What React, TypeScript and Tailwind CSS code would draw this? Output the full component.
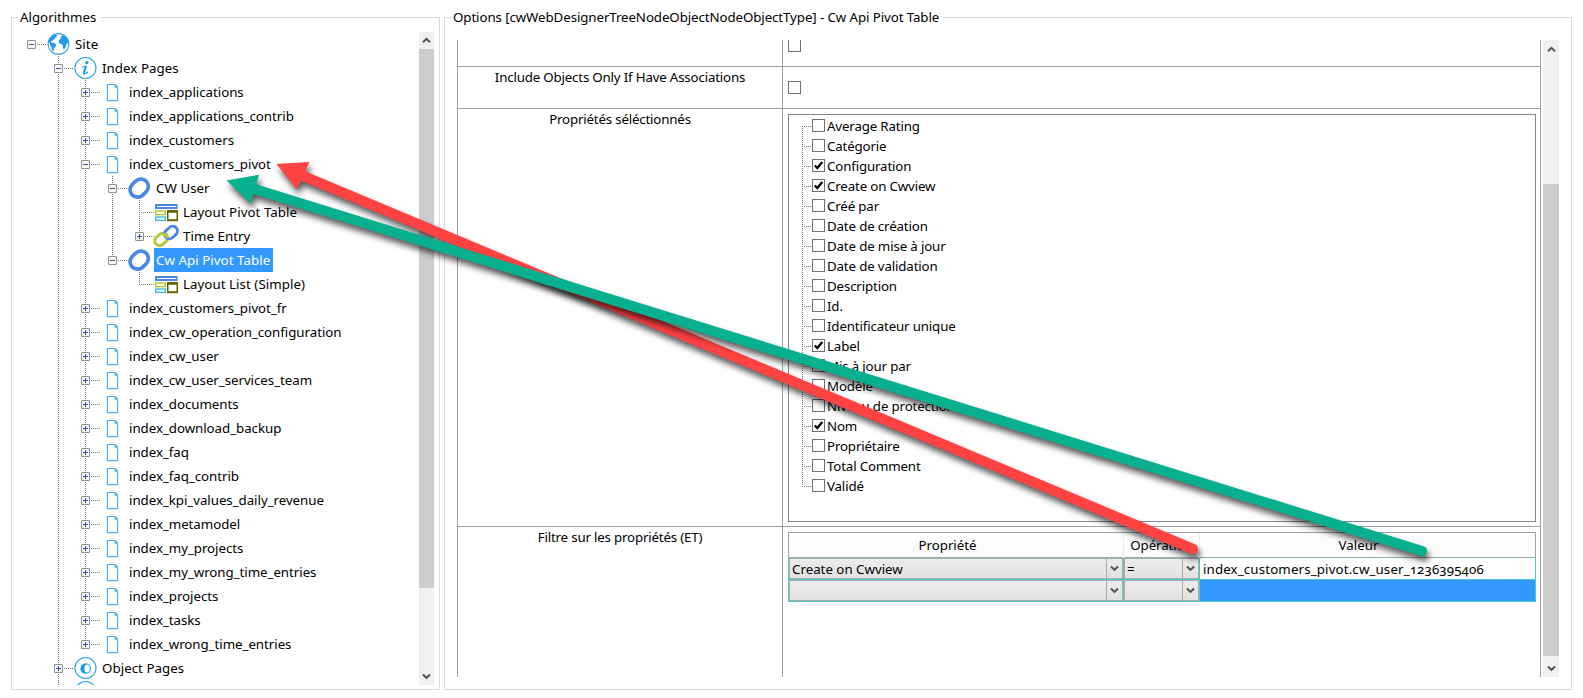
import type { ReactNode } from "react";

type IconName = "globe" | "info" | "page" | "ring" | "layout" | "links" | "object" | "circle";

// guides: one character per tree level.
// "." empty, "|" line passes through, "T" branch, "L" last branch, "H" root branch
type TreeRow = {
  guides: string;
  toggle?: "+" | "-";
  icon: IconName;
  label: string;
  selected?: boolean;
};

const page = (label: string): TreeRow => ({ guides: ".|T", toggle: "+", icon: "page", label });

const TREE: TreeRow[] = [
  { guides: "H", toggle: "-", icon: "globe", label: "Site" },
  { guides: ".T", toggle: "-", icon: "info", label: "Index Pages" },
  page("index_applications"),
  page("index_applications_contrib"),
  page("index_customers"),
  { guides: ".|T", toggle: "-", icon: "page", label: "index_customers_pivot" },
  { guides: ".||T", toggle: "-", icon: "ring", label: "CW User" },
  { guides: ".|||T", icon: "layout", label: "Layout Pivot Table" },
  { guides: ".|||L", toggle: "+", icon: "links", label: "Time Entry" },
  { guides: ".||L", toggle: "-", icon: "ring", label: "Cw Api Pivot Table", selected: true },
  { guides: ".||.L", icon: "layout", label: "Layout List (Simple)" },
  page("index_customers_pivot_fr"),
  page("index_cw_operation_configuration"),
  page("index_cw_user"),
  page("index_cw_user_services_team"),
  page("index_documents"),
  page("index_download_backup"),
  page("index_faq"),
  page("index_faq_contrib"),
  page("index_kpi_values_daily_revenue"),
  page("index_metamodel"),
  page("index_my_projects"),
  page("index_my_wrong_time_entries"),
  page("index_projects"),
  page("index_tasks"),
  { guides: ".|L", toggle: "+", icon: "page", label: "index_wrong_time_entries" },
  { guides: ".T", toggle: "+", icon: "object", label: "Object Pages" },
  { guides: ".T", icon: "circle", label: "" },
];

const PROPERTIES: [string, boolean][] = [
  ["Average Rating", false],
  ["Catégorie", false],
  ["Configuration", true],
  ["Create on Cwview", true],
  ["Créé par", false],
  ["Date de création", false],
  ["Date de mise à jour", false],
  ["Date de validation", false],
  ["Description", false],
  ["Id.", false],
  ["Identificateur unique", false],
  ["Label", true],
  ["Mis à jour par", false],
  ["Modèle", false],
  ["Niveau de protection", false],
  ["Nom", true],
  ["Propriétaire", false],
  ["Total Comment", false],
  ["Validé", false],
];

function Icon({ name }: { name: IconName }) {
  return (
    <svg width="27" height="24" viewBox="0 0 27 24" fill="none" className="shrink-0">
      {name === "globe" && (
        <g>
          <circle cx="13.5" cy="12" r="10.4" stroke="#3aa5e6" strokeWidth="1.1" fill="#fff" />
          <path
            fill="#1f9be6"
            d="M3.4 9.5C4.3 6 6.8 3.2 10 2.2l1.3.5 1 .8-1 .7.5 1.1-1.5.5-.8 1.5-1.7.4-.5 1.5-1.2-.2.3 1.4 1.5.3 2.2.9 1.100 1.700-.8 1.500-1.200 1.100-.5 1.800-.8 1.500-1.100-1.500-.1-2.300-1.500-1.800-.3-2zM16.200 4.300l1.800-1.100c2 .9 3.700 2.400 4.700 4.400l.8 2.900-.6 1.600-1-1.400-.6 2.200-1.200 3.200-1.400 1.500-1-2.500.2-2.100-1.500-1.100-1.900-.3-.9-1.800.7-2 1.600-.8-.5-1.100z"
          />
        </g>
      )}
      {name === "info" && (
        <g>
          <circle cx="13.5" cy="12" r="10.5" stroke="#2ba0e8" strokeWidth="1.1" fill="#fff" />
          <circle cx="14.8" cy="6.6" r="1.700" fill="#1f9be6" />
          <path d="M10 11.600c1.400-1.100 2.800-1.700 4.200-1.600M12 17.700c1.300.3 2.600-.5 4-1.700" stroke="#1f9be6" strokeWidth="1.100" />
          <path d="M13.900 10l-2 6.600c-.2.8.1 1.200.8 1.200" stroke="#1f9be6" strokeWidth="2.100" />
        </g>
      )}
      {name === "page" && (
        <path d="M8.400 4.500h7.900l2.300 2.600v13.600H8.400z M16.200 4.500v2.600h2.400" stroke="#46b4f0" strokeWidth="1.200" />
      )}
      {name === "ring" && (
        <rect x="3.400" y="4.600" width="19.600" height="15" rx="7.500" transform="rotate(-44 13.200 12.100)" stroke="#4a88e4" strokeWidth="3.700" />
      )}
      {name === "layout" && (
        <g>
          <rect x="3" y="5" width="20.500" height="3" stroke="#4a88e4" strokeWidth="2" fill="#fff" />
          <rect x="2.800" y="11" width="9.400" height="3.600" stroke="#b2cb3c" strokeWidth="1.500" fill="#fff" />
          <rect x="2.700" y="17" width="9.500" height="3.400" stroke="#46b4f0" strokeWidth="1.400" fill="#fff" />
          <path d="M14 10h11v11.200H14z" fill="#666600" />
          <path d="M15.500 12.800h8v6.400h-8z" fill="#fff" />
        </g>
      )}
      {name === "links" && (
        <g strokeWidth="2.900">
          <rect x="1.200" y="10.600" width="14" height="9.600" rx="4.800" transform="rotate(-42 8.200 15.400)" stroke="#b2cb3c" />
          <rect x="11" y="3.700" width="14" height="9.600" rx="4.800" transform="rotate(-42 18 8.500)" stroke="#4a88e4" />
          <path d="M9.500 10.800c2.200-.8 4.600.5 4.900 3.300" stroke="#b2cb3c" />
        </g>
      )}
      {name === "object" && (
        <g>
          <circle cx="13.5" cy="12" r="10.5" stroke="#2ba0e8" strokeWidth="1.1" fill="#fff" />
          <circle cx="13.700" cy="12.500" r="5.300" fill="#1f9be6" />
          <ellipse cx="15.100" cy="12.500" rx="2.700" ry="4.100" fill="#fff" />
        </g>
      )}
      {name === "circle" && <circle cx="13.5" cy="12" r="10.5" stroke="#2ba0e8" strokeWidth="1.1" />}
    </svg>
  );
}

function Guide({ kind, toggle }: { kind: string; toggle?: "+" | "-" }) {
  const vertical = kind === "|" || kind === "T" ? 24 : kind === "L" ? 13 : 0;
  const branch = kind === "T" || kind === "L" || kind === "H";
  return (
    <svg width="27" height="24" viewBox="0 0 27 24" fill="none" className="shrink-0 overflow-visible">
      {vertical > 0 && <path d={`M13.5 0V${vertical}`} stroke="#777" strokeDasharray="1 1" />}
      {branch && <path d="M13 12.500H28" stroke="#777" strokeDasharray="1 1" />}
      {toggle && (
        <g>
          <rect x="9.500" y="8.500" width="8" height="8" rx="0.500" fill="#f5f5f5" stroke="#919191" />
          <path d="M11 12.500h5" stroke="#3a55a8" />
          {toggle === "+" && <path d="M13.500 10v5" stroke="#3a55a8" />}
        </g>
      )}
    </svg>
  );
}

function Chevron({ up = false }: { up?: boolean }) {
  return (
    <svg width="9" height="7" viewBox="0 0 9 7" fill="none" className="shrink-0">
      <path d={up ? "M1 5.200L4.500 1.800L8 5.200" : "M1 1.500L4.500 4.900L8 1.500"} stroke="#505050" strokeWidth="2" />
    </svg>
  );
}

function Checkbox({ checked = false }: { checked?: boolean }) {
  return (
    <span className="flex size-[13px] shrink-0 items-center justify-center border border-[#707070] bg-white">
      {checked && (
        <svg width="11" height="11" viewBox="0 0 11 11" fill="none">
          <path d="M1.800 5.400L4.300 8L9.300 2" stroke="#000" strokeWidth="2.200" />
        </svg>
      )}
    </span>
  );
}

function Combo({ value }: { value: string }) {
  return (
    <div className="flex h-[21px] border border-[#acacac] bg-linear-to-b from-[#ececec] to-[#e2e2e2]">
      <span className="flex-1 pt-px pl-0.5 leading-[19px]">{value}</span>
      <span className="flex w-4 items-center justify-center border-l border-[#acacac]">
        <Chevron />
      </span>
    </div>
  );
}

function Group({ title, className, children }: { title: string; className: string; children: ReactNode }) {
  return (
    <fieldset className={`h-[681px] min-w-0 border border-[#dcdcdc] ${className}`}>
      <legend className="h-4 pr-1 pl-0.5 leading-4 whitespace-nowrap">{title}</legend>
      {children}
    </fieldset>
  );
}

function Arrows() {
  return (
    <svg width="1583" height="698" viewBox="0 0 1583 698" className="pointer-events-none absolute top-0 left-0">
      <defs>
        <filter id="shadow" filterUnits="userSpaceOnUse" x="0" y="0" width="1583" height="698" colorInterpolationFilters="sRGB">
          <feDropShadow dx="2" dy="5" stdDeviation="3" floodColor="#000" floodOpacity="0.65" />
        </filter>
      </defs>
      <g filter="url(#shadow)" fill="#ff4242" stroke="#ff4242">
        <path d="M302 175.500L1193 549" strokeWidth="10.200" strokeLinecap="round" />
        <path d="M276.500 164L309.500 162L297 189.500z" stroke="none" />
      </g>
      <g filter="url(#shadow)" fill="#08b08f" stroke="#08b08f">
        <path d="M253 188.500L1422 551" strokeWidth="10.200" strokeLinecap="round" />
        <path d="M226.500 180.500L259 174.800L250.800 203.500z" stroke="none" />
      </g>
    </svg>
  );
}

export default function App() {
  return (
    <div className="relative flex h-[698px] w-[1583px] gap-1 overflow-hidden bg-white pt-[9px] pl-[11px] font-['Noto_Sans',sans-serif] text-[13.3px] text-black">
      <Group title="Algorithmes" className="w-[429px] pl-[6px]">
        <div className="mt-[7px] flex h-[653px] overflow-hidden">
          <div className="w-[401px]">
            {TREE.map((row, i) => (
              <div key={i} className="flex h-6 whitespace-nowrap">
                {row.guides.split("").map((kind, level) => (
                  <Guide key={level} kind={kind} toggle={level === row.guides.length - 1 ? row.toggle : undefined} />
                ))}
                <Icon name={row.icon} />
                <span
                  className={
                    row.selected
                      ? "ml-px bg-[#3399ff] pr-[3px] pl-0.5 leading-6 tracking-[0.05px] text-white"
                      : row.icon === "page"
                        ? "ml-px px-0.5 leading-6 tracking-[-0.04px]"
                        : "ml-px px-0.5 leading-6 tracking-[0.05px]"
                  }
                >
                  {row.label}
                </span>
              </div>
            ))}
          </div>
          <div className="flex w-[15px] flex-col items-center bg-[#f0f0f0]">
            <div className="flex h-[17px] items-center">
              <Chevron up />
            </div>
            <div className="h-[539px] w-full bg-[#cdcdcd]" />
            <div className="flex-1" />
            <div className="flex h-[17px] items-center">
              <Chevron />
            </div>
          </div>
        </div>
      </Group>

      <Group title="Options [cwWebDesignerTreeNodeObjectNodeObjectType] - Cw Api Pivot Table" className="w-[1128px] pl-[6px] tracking-[-0.09px]">
        <div className="mt-[15px] ml-[6px] flex h-[637px] gap-[2px] overflow-hidden">
          <div className="grid w-[1084px] grid-cols-[325px_1fr] grid-rows-[27px_42px_418px_150px] border-x border-[#a0a0a0]">
            <div className="border-r border-b border-[#a0a0a0]" />
            <div className="border-b border-[#a0a0a0] pl-[5px]">
              <div className="-mt-px">
                <Checkbox />
              </div>
            </div>

            <div className="border-r border-b border-[#a0a0a0] text-center leading-5 tracking-[-0.18px]">
              Include Objects Only If Have Associations
            </div>
            <div className="flex items-start border-b border-[#a0a0a0] pt-[14px] pl-[5px]">
              <Checkbox />
            </div>

            <div className="border-r border-b border-[#a0a0a0] text-center leading-5 tracking-[-0.18px]">Propriétés séléctionnés</div>
            <div className="border-b border-[#a0a0a0] pt-[5px] pl-[5px]">
              <div className="h-[408px] w-[748px] border border-[#828790] pt-px pl-[6px]">
                {PROPERTIES.map(([name, checked], i) => (
                  <div key={name} className="flex h-5 whitespace-nowrap">
                    <svg width="17" height="20" viewBox="0 0 17 20" fill="none" className="shrink-0">
                      <path
                        d={i === 0 ? "M7.500 10V20" : i === PROPERTIES.length - 1 ? "M7.500 0V11" : "M7.500 0V20"}
                        stroke="#777"
                        strokeDasharray="1 1"
                      />
                      <path d="M7 10.500H17" stroke="#777" strokeDasharray="1 1" />
                    </svg>
                    <div className="pt-[3px]">
                      <Checkbox checked={checked} />
                    </div>
                    <span className="ml-0.5 leading-5 tracking-[-0.15px]">{name}</span>
                  </div>
                ))}
              </div>
            </div>

            <div className="border-r border-[#a0a0a0] text-center leading-5 tracking-[-0.18px]">Filtre sur les propriétés (ET)</div>
            <div className="pt-[5px] pl-[5px]">
              <div className="w-[748px] tracking-normal">
                <div className="grid h-[25px] grid-cols-[335px_76px_1fr] border-x border-t border-[#a0a0a0] bg-[#fcfcfc] text-center leading-[25px]">
                  <span className="border-r border-[#e8eef5] pr-[17px]">Propriété</span>
                  <span className="border-r border-[#e8eef5] tracking-[-0.1px]">Opération</span>
                  <span className="pr-[18px]">Valeur</span>
                </div>
                <div className="grid grid-cols-[334px_75px_1fr] grid-rows-[21px_21px] gap-px border border-t-[#8fb0b0] border-r-[#4fc9c4] border-b-[#4fc9c4] border-l-[#4fc9c4] bg-[#4fc9c4]">
                  <Combo value="Create on Cwview" />
                  <Combo value="=" />
                  <div className="bg-white pt-px pl-[3px] leading-[20px] tracking-[0.14px] oldstyle-nums">
                    index_customers_pivot.cw_user_1236395406
                  </div>
                  <Combo value="" />
                  <Combo value="" />
                  <div className="bg-[#3399ff]" />
                </div>
              </div>
            </div>
          </div>
          <div className="flex w-4 flex-col items-center bg-[#f0f0f0]">
            <div className="flex h-[18px] items-center">
              <Chevron up />
            </div>
            <div className="h-[126px]" />
            <div className="h-[472px] w-full bg-[#cdcdcd]" />
            <div className="flex flex-1 items-center pt-1">
              <Chevron />
            </div>
          </div>
        </div>
      </Group>

      <Arrows />
    </div>
  );
}
